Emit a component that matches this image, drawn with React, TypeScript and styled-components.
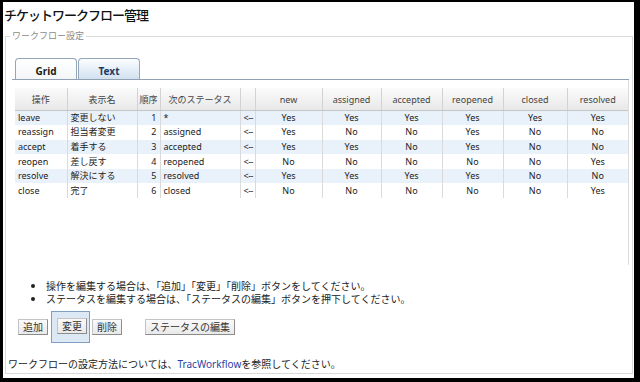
import styled, { createGlobalStyle } from 'styled-components'

const FONT = `"Noto Sans", "Noto Sans CJK JP", sans-serif`
const JP = `"Noto Sans CJK JP", "Noto Sans", sans-serif`

const columns = [52, 70, 23, 80, 15, 67, 59, 61, 61, 64, 61]
const statusHeads = ['new', 'assigned', 'accepted', 'reopened', 'closed', 'resolved']

const rows = [
  { op: 'leave', name: '変更しない', order: 1, next: '*', flags: ['Yes', 'Yes', 'Yes', 'Yes', 'Yes', 'Yes'] },
  { op: 'reassign', name: '担当者変更', order: 2, next: 'assigned', flags: ['Yes', 'No', 'No', 'Yes', 'No', 'No'] },
  { op: 'accept', name: '着手する', order: 3, next: 'accepted', flags: ['Yes', 'Yes', 'No', 'Yes', 'No', 'No'] },
  { op: 'reopen', name: '差し戻す', order: 4, next: 'reopened', flags: ['No', 'No', 'No', 'No', 'No', 'Yes'] },
  { op: 'resolve', name: '解決にする', order: 5, next: 'resolved', flags: ['Yes', 'Yes', 'Yes', 'Yes', 'No', 'No'] },
  { op: 'close', name: '完了', order: 6, next: 'closed', flags: ['No', 'No', 'No', 'No', 'No', 'Yes'] },
]

const GlobalStyle = createGlobalStyle`
  body {
    margin: 0;
    background: #fff;
    font-family: ${FONT};
  }
`

const Frame = styled.div`
  width: 640px;
  height: 382px;
  box-sizing: border-box;
  border-style: solid;
  border-color: #000;
  border-width: 2px 6px 4px 3px;
  background: #fff;
  display: flex;
  flex-direction: column;
`

const Title = styled.h1`
  margin: 0;
  padding: 5px 0 0 1px;
  font-family: ${JP};
  font-size: 13px;
  font-weight: 500;
  letter-spacing: -1px;
  line-height: 16px;
  color: #111;
`

const Panel = styled.section`
  position: relative;
  flex: 1;
  margin: 13px 1px 4px 2px;
  border: 1px solid #d9d9d9;
  display: flex;
  flex-direction: column;
`

const Legend = styled.span`
  position: absolute;
  top: -7px;
  left: 4px;
  padding: 0 2px;
  background: #fff;
  font-family: ${JP};
  font-size: 9px;
  line-height: 12px;
  color: #8c8c8c;
`

const TabStrip = styled.div`
  margin: 21px 3px 0 6px;
  padding-left: 3px;
  display: flex;
  align-items: flex-end;
  border-bottom: 1px solid #8fa1b3;
`

const Tab = styled.div<{ $active?: boolean }>`
  width: 60px;
  height: 20px;
  margin-right: 1px;
  border: 1px solid #95a6b8;
  border-bottom: none;
  border-radius: 4px 4px 0 0;
  text-align: center;
  font-size: 10px;
  font-weight: 700;
  line-height: 24px;
  color: ${(p) => (p.$active ? '#1a1a1a' : '#1d3b64')};
  background: ${(p) =>
    p.$active
      ? 'linear-gradient(#ffffff, #f3f5f7)'
      : 'linear-gradient(#fbfdff, #d2e1f0)'};
`

const GridPanel = styled.div`
  height: 185px;
  box-sizing: border-box;
  margin: 0 3px 0 6px;
  padding: 8px 0 0 3px;
  border-right: 1px solid #dcdcdc;
`

const Table = styled.table`
  width: 100%;
  table-layout: fixed;
  border-collapse: collapse;
  font-size: 9px;
  color: #222;
`

const HeadCell = styled.th`
  height: 22px;
  padding: 0;
  font-weight: 400;
  text-align: center;
  color: #444;
  background: linear-gradient(#fbfbfb, #e8e8e8);
  border-right: 1px solid #d2d2d2;
  border-bottom: 1px solid #c6c6c6;
  white-space: nowrap;
  overflow: hidden;

  &:last-child {
    border-right: none;
  }
`

const Row = styled.tr<{ $alt?: boolean }>`
  height: 14.6px;
  background: ${(p) => (p.$alt ? '#e9f1fa' : '#fff')};
`

const Cell = styled.td<{ $align?: 'left' | 'right' | 'center' }>`
  padding: 0 3px;
  line-height: 12px;
  text-align: ${(p) => p.$align || 'left'};
  border-right: 1px solid #dadada;
  white-space: nowrap;
  overflow: hidden;

  &:last-child {
    border-right: none;
  }
`

const Arrow = styled(Cell)`
  padding: 0 1px 0 3px;
  letter-spacing: -0.5px;
`

const Notes = styled.ul`
  margin: 14px 0 0;
  padding-left: 40px;
  font-family: ${JP};
  font-size: 10px;
  line-height: 13px;
  color: #222;
`

const ButtonRow = styled.div`
  margin-top: 6px;
  padding-left: 12px;
  display: flex;
  align-items: center;
`

const Button = styled.button<{ $ml?: number }>`
  margin: 0 0 0 ${(p) => p.$ml || 0}px;
  height: 16px;
  padding: 0 4px;
  font-family: ${JP};
  font-size: 10px;
  line-height: 14px;
  color: #333;
  background: linear-gradient(#fafafa, #e9e9e9);
  border: 1px solid;
  border-color: #c4c4c4 #8c8c8c #8c8c8c #c4c4c4;
  border-radius: 0;
`

const Selected = styled.span<{ $ml?: number }>`
  margin-left: ${(p) => p.$ml || 0}px;
  padding: 6px 2px 8px 5px;
  display: flex;
  background: #dce8f4;
  border: 1px solid #7f9fc4;
`

const Footer = styled.p`
  margin: 14px 0 0;
  padding-left: 2px;
  font-family: ${JP};
  font-size: 10px;
  line-height: 13px;
  color: #222;
`

const Link = styled.a`
  font-family: ${FONT};
  color: #2b3fa6;
  text-decoration: none;
`

export default function App() {
  return (
    <>
      <GlobalStyle />
      <Frame>
        <Title>チケットワークフロー管理</Title>
        <Panel>
          <Legend>ワークフロー設定</Legend>
          <TabStrip>
            <Tab $active>Grid</Tab>
            <Tab>Text</Tab>
          </TabStrip>
          <GridPanel>
            <Table>
              <colgroup>
                {columns.map((w, i) => (
                  <col key={i} style={{ width: i === columns.length - 1 ? undefined : w }} />
                ))}
              </colgroup>
              <thead>
                <tr>
                  <HeadCell>操作</HeadCell>
                  <HeadCell>表示名</HeadCell>
                  <HeadCell>順序</HeadCell>
                  <HeadCell>次のステータス</HeadCell>
                  <HeadCell />
                  {statusHeads.map((s) => (
                    <HeadCell key={s}>{s}</HeadCell>
                  ))}
                </tr>
              </thead>
              <tbody>
                {rows.map((r, i) => (
                  <Row key={r.op} $alt={i % 2 === 0}>
                    <Cell>{r.op}</Cell>
                    <Cell>{r.name}</Cell>
                    <Cell $align="right">{r.order}</Cell>
                    <Cell>{r.next}</Cell>
                    <Arrow>&lt;--</Arrow>
                    {r.flags.map((f, j) => (
                      <Cell key={j} $align="center">
                        {f}
                      </Cell>
                    ))}
                  </Row>
                ))}
              </tbody>
            </Table>
          </GridPanel>
          <Notes>
            <li>操作を編集する場合は、「追加」「変更」「削除」ボタンをしてください。</li>
            <li>ステータスを編集する場合は、「ステータスの編集」ボタンを押下してください。</li>
          </Notes>
          <ButtonRow>
            <Button>追加</Button>
            <Selected $ml={3}>
              <Button>変更</Button>
            </Selected>
            <Button $ml={2}>削除</Button>
            <Button $ml={23}>ステータスの編集</Button>
          </ButtonRow>
          <Footer>
            ワークフローの設定方法については、<Link href="#">TracWorkflow</Link>を参照してください。
          </Footer>
        </Panel>
      </Frame>
    </>
  )
}
